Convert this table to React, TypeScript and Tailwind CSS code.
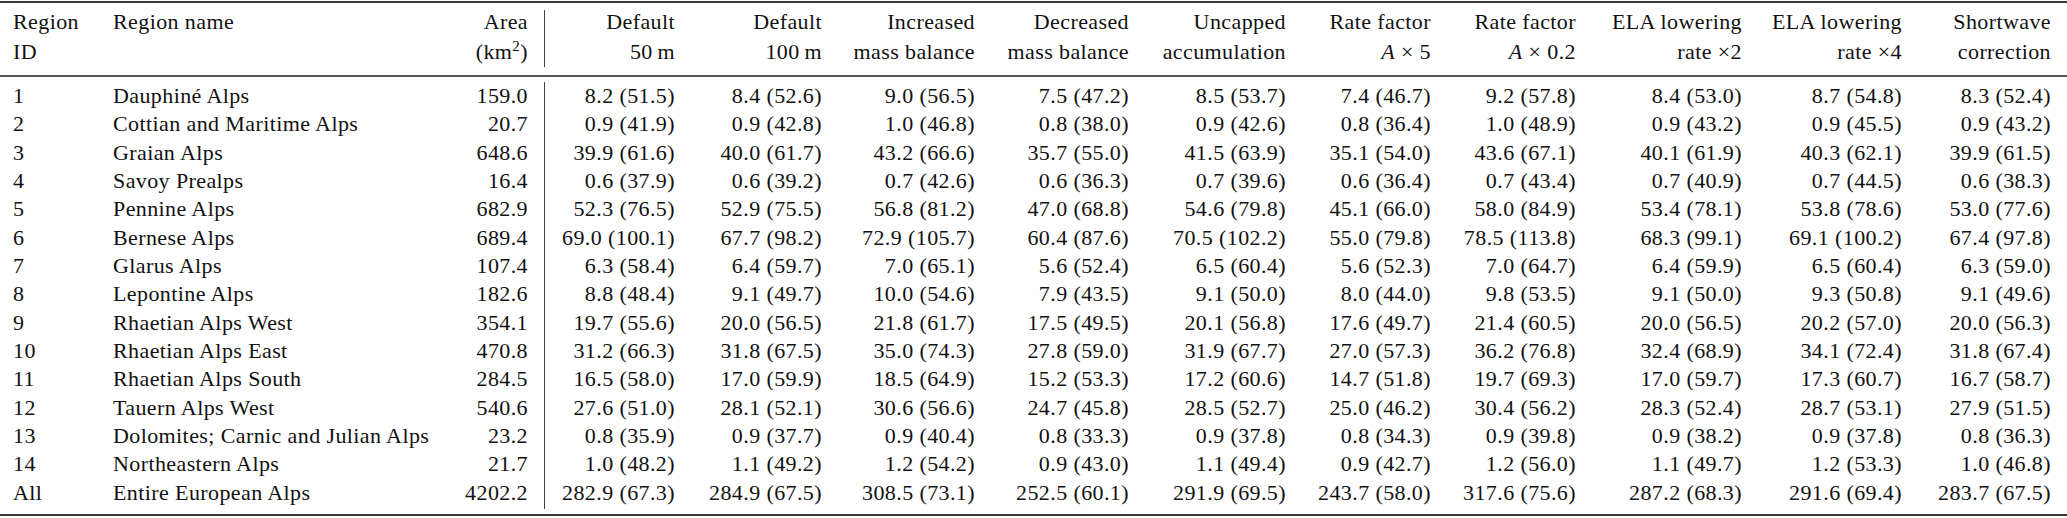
import React from 'react';

const cols =
  'grid grid-cols-[113px_327px_105px_130px_147px_153px_154px_157px_145px_145px_166px_160px_149px]';

const rows: [string, string, string, string[]][] = [
  ['1', 'Dauphiné Alps', '159.0', ['8.2 (51.5)', '8.4 (52.6)', '9.0 (56.5)', '7.5 (47.2)', '8.5 (53.7)', '7.4 (46.7)', '9.2 (57.8)', '8.4 (53.0)', '8.7 (54.8)', '8.3 (52.4)']],
  ['2', 'Cottian and Maritime Alps', '20.7', ['0.9 (41.9)', '0.9 (42.8)', '1.0 (46.8)', '0.8 (38.0)', '0.9 (42.6)', '0.8 (36.4)', '1.0 (48.9)', '0.9 (43.2)', '0.9 (45.5)', '0.9 (43.2)']],
  ['3', 'Graian Alps', '648.6', ['39.9 (61.6)', '40.0 (61.7)', '43.2 (66.6)', '35.7 (55.0)', '41.5 (63.9)', '35.1 (54.0)', '43.6 (67.1)', '40.1 (61.9)', '40.3 (62.1)', '39.9 (61.5)']],
  ['4', 'Savoy Prealps', '16.4', ['0.6 (37.9)', '0.6 (39.2)', '0.7 (42.6)', '0.6 (36.3)', '0.7 (39.6)', '0.6 (36.4)', '0.7 (43.4)', '0.7 (40.9)', '0.7 (44.5)', '0.6 (38.3)']],
  ['5', 'Pennine Alps', '682.9', ['52.3 (76.5)', '52.9 (75.5)', '56.8 (81.2)', '47.0 (68.8)', '54.6 (79.8)', '45.1 (66.0)', '58.0 (84.9)', '53.4 (78.1)', '53.8 (78.6)', '53.0 (77.6)']],
  ['6', 'Bernese Alps', '689.4', ['69.0 (100.1)', '67.7 (98.2)', '72.9 (105.7)', '60.4 (87.6)', '70.5 (102.2)', '55.0 (79.8)', '78.5 (113.8)', '68.3 (99.1)', '69.1 (100.2)', '67.4 (97.8)']],
  ['7', 'Glarus Alps', '107.4', ['6.3 (58.4)', '6.4 (59.7)', '7.0 (65.1)', '5.6 (52.4)', '6.5 (60.4)', '5.6 (52.3)', '7.0 (64.7)', '6.4 (59.9)', '6.5 (60.4)', '6.3 (59.0)']],
  ['8', 'Lepontine Alps', '182.6', ['8.8 (48.4)', '9.1 (49.7)', '10.0 (54.6)', '7.9 (43.5)', '9.1 (50.0)', '8.0 (44.0)', '9.8 (53.5)', '9.1 (50.0)', '9.3 (50.8)', '9.1 (49.6)']],
  ['9', 'Rhaetian Alps West', '354.1', ['19.7 (55.6)', '20.0 (56.5)', '21.8 (61.7)', '17.5 (49.5)', '20.1 (56.8)', '17.6 (49.7)', '21.4 (60.5)', '20.0 (56.5)', '20.2 (57.0)', '20.0 (56.3)']],
  ['10', 'Rhaetian Alps East', '470.8', ['31.2 (66.3)', '31.8 (67.5)', '35.0 (74.3)', '27.8 (59.0)', '31.9 (67.7)', '27.0 (57.3)', '36.2 (76.8)', '32.4 (68.9)', '34.1 (72.4)', '31.8 (67.4)']],
  ['11', 'Rhaetian Alps South', '284.5', ['16.5 (58.0)', '17.0 (59.9)', '18.5 (64.9)', '15.2 (53.3)', '17.2 (60.6)', '14.7 (51.8)', '19.7 (69.3)', '17.0 (59.7)', '17.3 (60.7)', '16.7 (58.7)']],
  ['12', 'Tauern Alps West', '540.6', ['27.6 (51.0)', '28.1 (52.1)', '30.6 (56.6)', '24.7 (45.8)', '28.5 (52.7)', '25.0 (46.2)', '30.4 (56.2)', '28.3 (52.4)', '28.7 (53.1)', '27.9 (51.5)']],
  ['13', 'Dolomites; Carnic and Julian Alps', '23.2', ['0.8 (35.9)', '0.9 (37.7)', '0.9 (40.4)', '0.8 (33.3)', '0.9 (37.8)', '0.8 (34.3)', '0.9 (39.8)', '0.9 (38.2)', '0.9 (37.8)', '0.8 (36.3)']],
  ['14', 'Northeastern Alps', '21.7', ['1.0 (48.2)', '1.1 (49.2)', '1.2 (54.2)', '0.9 (43.0)', '1.1 (49.4)', '0.9 (42.7)', '1.2 (56.0)', '1.1 (49.7)', '1.2 (53.3)', '1.0 (46.8)']],
  ['All', 'Entire European Alps', '4202.2', ['282.9 (67.3)', '284.9 (67.5)', '308.5 (73.1)', '252.5 (60.1)', '291.9 (69.5)', '243.7 (58.0)', '317.6 (75.6)', '287.2 (68.3)', '291.6 (69.4)', '283.7 (67.5)']],
];

// two header lines per experiment column
const headers: [React.ReactNode, React.ReactNode][] = [
  ['Default', <>50&#8201;m</>],
  ['Default', <>100&#8201;m</>],
  ['Increased', 'mass balance'],
  ['Decreased', 'mass balance'],
  ['Uncapped', 'accumulation'],
  ['Rate factor', <><i>A</i> × 5</>],
  ['Rate factor', <><i>A</i> × 0.2</>],
  ['ELA lowering', 'rate ×2'],
  ['ELA lowering', 'rate ×4'],
  ['Shortwave', 'correction'],
];

export default function App() {
  return (
    <div className="w-[2067px] h-[518px] bg-white text-[#111] pt-px font-['Liberation_Serif','Times_New_Roman',serif] text-[22px] tracking-[0.4px]">
      <div className="h-[2px] bg-[#3a3a3a]" />

      <div className={`${cols} leading-[30px] pt-[4px] pb-[8px]`}>
        <div className="pl-[13px]">
          <div>Region</div>
          <div>ID</div>
        </div>
        <div>Region name</div>
        <div className="text-right pr-[16px] border-r border-[#444] mt-[3px]">
          <div className="-mt-[3px]">Area</div>
          <div>
            (km<span className="text-[15px] leading-none relative -top-[8px]">2</span>)
          </div>
        </div>
        {headers.map(([a, b], i) => (
          <div key={i} className="text-right">
            <div>{a}</div>
            <div>{b}</div>
          </div>
        ))}
      </div>

      <div className="h-[2px] bg-[#555]" />

      <div className="pt-[5px]">
        {rows.map(([id, name, area, vals], r) => (
          <div key={id} className={`${cols} leading-[28.35px]`}>
            <div className="pl-[13px]">{id}</div>
            <div className="whitespace-nowrap">{name}</div>
            <div
              className={
                r === rows.length - 1
                  ? 'text-right pr-[16px] border-r border-[#444] pb-[2px]'
                  : 'text-right pr-[16px] border-r border-[#444]'
              }
            >
              {area}
            </div>
            {vals.map((v, i) => (
              <div key={i} className="text-right whitespace-nowrap">
                {v}
              </div>
            ))}
          </div>
        ))}
      </div>

      <div className="mt-[5px] h-[2px] bg-[#3a3a3a]" />
    </div>
  );
}
